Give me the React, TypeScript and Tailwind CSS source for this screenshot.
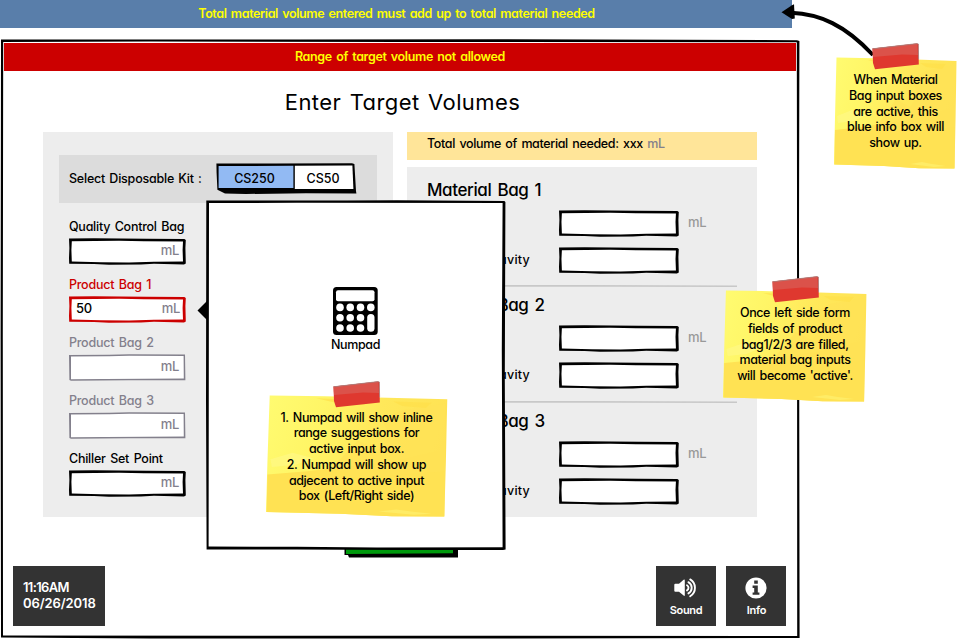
import type { ReactNode } from "react";

type Tone = "black" | "red" | "gray";

const toneFill = { black: "#000", red: "#cc0000", gray: "#83808c" };

/* Hand-drawn box outline that stretches to its parent */
function SketchBox({ tone = "black" }: { tone?: Tone }) {
  const inner =
    tone === "gray"
      ? "M2 2.4 L40 2.2 L60 1.8 L114.6 1.9 L114.8 24.6 L35 25 L2 25.2 Z"
      : "M2.8 3.2 L50 2.8 L75 3.2 L114 3.6 L113.6 12 L114 23.4 L85 23.8 L60 24.4 L32 24.2 L2.8 23.4 L2.4 12 Z";
  const outer =
    tone === "gray"
      ? "M0 1 L40 0.8 L60 0.2 L116 0.4 L116.4 26.3 L60 26.2 L2 26.8 L0.4 26 Z"
      : "M0 0.6 L25 0.2 L78 0.8 L115.4 1 L116.8 2 L116.4 10 L116.8 25.6 L115 26.4 L85 25.8 L72 26.6 L40 26.8 L25 26 L0.2 25.8 L0 20 L0.4 10 Z";
  return (
    <svg className="absolute inset-0 h-full w-full" viewBox="0 0 117 27" preserveAspectRatio="none">
      <path d={outer} fill={toneFill[tone]} />
      <path d={inner} fill="#fff" />
    </svg>
  );
}

const fields: { label: string; tone: Tone; value?: string }[] = [
  { label: "Quality Control Bag", tone: "black" },
  { label: "Product Bag 1", tone: "red", value: "50" },
  { label: "Product Bag 2", tone: "gray" },
  { label: "Product Bag 3", tone: "gray" },
  { label: "Chiller Set Point", tone: "black" },
];

const labelTone = { black: "text-black", red: "text-[#cc0000]", gray: "text-[#83808c]" };

function Field({ label, tone, value }: { label: string; tone: Tone; value?: string }) {
  return (
    <div className="h-[58px]">
      <div className={`h-[22px] leading-[22px] tracking-[-0.25px] [word-spacing:1.5px] ${labelTone[tone]}`}>
        {label}
      </div>
      <div className="relative h-[27px] w-[117px]">
        <SketchBox tone={tone} />
        <div className="relative flex h-[26px] items-center justify-between pr-[7px] pl-[7px] text-[13px] tracking-[-0.3px]">
          <span>{value}</span>
          <span className={value ? "-mr-[1px] text-[#83808c]" : "text-[#83808c]"}>mL</span>
        </div>
      </div>
    </div>
  );
}

function MaterialBag({ n }: { n: number }) {
  return (
    <section className="pl-5">
      <h2
        className={`text-[17px] leading-6 tracking-[-0.4px] [word-spacing:2px] ${n === 1 ? "h-[43px] pt-[11px]" : "h-[38px] pt-[6px]"}`}
      >
        Material Bag {n}
      </h2>
      <div className="flex h-[37px] pl-[132px]">
        <div className="relative h-[27px] w-[120px]">
          <SketchBox />
        </div>
        <span className="ml-[9px] text-[13px] leading-[25px] tracking-[-0.3px] text-[#999]">mL</span>
      </div>
      <div className="flex h-[27px]">
        <span className="w-[132px] leading-[26px] tracking-[0.2px] [word-spacing:4px]">Specific Gravity</span>
        <div className="relative h-[27px] w-[120px]">
          <SketchBox />
        </div>
      </div>
    </section>
  );
}

function Rule() {
  return (
    <svg className="ml-5 block h-[2px] w-[310px]" viewBox="0 0 310 2">
      <path d="M0 0 L160 0 L310 0.6 L310 2 L190 1.8 L0 1.6 Z" fill="#c8c8c8" />
    </svg>
  );
}

function Note({ id, className, lines }: { id: string; className: string; lines: ReactNode[] }) {
  return (
    <div className={`absolute ${className}`}>
      <svg className="absolute inset-0 h-full w-full" viewBox="0 0 123 112" preserveAspectRatio="none">
        <defs>
          <linearGradient id={id} x1="0" y1="0.1" x2="1" y2="0.35">
            <stop offset="0" stopColor="#fffb70" />
            <stop offset="0.3" stopColor="#fff566" />
            <stop offset="0.6" stopColor="#ffe85a" />
            <stop offset="1" stopColor="#ffe253" />
          </linearGradient>
        </defs>
        <path d="M2.5 0.5 L40 1.2 L82 2.6 L122.5 4 L121.6 60 L120.5 111.6 L85 111.2 L50 109 L0 107.4 L1 60 Z" fill={`url(#${id})`} />
        <path d="M1 73 L28 70 L52 66 L80 62 L121 50 L120.5 111.6 L85 111.2 L50 109 L0.4 107.4 Z" fill="#ffe253" />
        <path d="M45 66 L62 42 L76 50 L84 38 L78 22 L92 14 L121 8 L121 70 L60 76 Z" fill="#ffe357" opacity=".7" />
        <path d="M34 3 L72 5 L66 9 L50 8 Z M86 6 L112 7 L108 12 L92 10 Z" fill="#ffe04a" opacity=".7" />
        <path d="M3 59 L18 53 L32 58 L20 64 L4 66 Z" fill="#fff98a" opacity=".6" />
        <path d="M76 107 L88 105 L98 107 L112 109 L100 110 Z" fill="#ffec66" />
      </svg>
      <div className="relative pt-[15px] text-center leading-[15.75px] tracking-[-0.4px] [word-spacing:1.3px]">
        {lines.map((line, i) => (
          <div key={i} className="whitespace-nowrap">
            {line}
          </div>
        ))}
      </div>
      <svg className="absolute -top-[14px] left-1/2 -ml-[23.5px] h-[27px] w-[48px]" viewBox="0 0 48 27">
        <path d="M0.5 5.5 L45 0.5 L46.5 1 L46.8 21.5 L3 26.3 L1 20 Z" fill="#df382f" />
        <path d="M0.5 5.5 L45 0.5 L46 12 L30 11.5 L1 14 Z" fill="#db524a" />
        <path d="M0.5 5.8 L45 0.6 L46.3 1 L46.6 16" stroke="#a58482" strokeWidth=".8" fill="none" />
      </svg>
    </div>
  );
}

function CalculatorIcon() {
  return (
    <svg className="h-12 w-[45px]" viewBox="0 0 45 48">
      <rect width="44.7" height="48" rx="3.5" />
      <g fill="#fff">
        <rect x="3" y="3.2" width="38.5" height="11" rx="2" />
        {[20.4, 30.7, 41].map((y) =>
          [7, 17.2, 27.5].map((x) => <circle key={`${x}-${y}`} cx={x} cy={y} r="3.8" />),
        )}
        <circle cx="37.8" cy="20.4" r="3.8" />
        <rect x="34.2" y="27" width="7.3" height="17.8" rx="3.6" />
      </g>
    </svg>
  );
}

function SoundIcon() {
  return (
    <svg className="h-5 w-6" viewBox="0 0 24 20">
      <path d="M0.3 6.8 Q0.3 5.8 1.3 5.8 H5 L9.6 1.8 Q10.8 1 10.8 2.4 V17 Q10.8 18.4 9.6 17.6 L5 13.8 H1.3 Q0.3 13.8 0.3 12.8 Z" fill="#fff" />
      <g fill="none" stroke="#fff" strokeWidth="1.9" strokeLinecap="round">
        <path d="M13 7.2 A3 3 0 0 1 13 12.4" />
        <path d="M14.4 4.2 A6.4 6.4 0 0 1 14.4 15.4" />
        <path d="M16.2 1.4 A9.8 9.8 0 0 1 16.2 18.2" />
      </g>
    </svg>
  );
}

function InfoIcon() {
  return (
    <svg className="h-[22px] w-[22px]" viewBox="0 0 22 22">
      <circle cx="11" cy="11" r="10.6" fill="#fff" />
      <path d="M9.2 3.5 H12.8 V6.8 H9.2 Z M7.6 8.6 H12.8 V15.4 H14.4 V17.8 H7.6 V15.4 H9.2 V10.9 H7.6 Z" fill="#333" />
    </svg>
  );
}

function Popover() {
  return (
    <div className="absolute top-[161px] left-[197px] h-[350px] w-[309px]">
      <svg className="absolute inset-0" width="309" height="350" viewBox="0 0 309 350">
        <path d="M0.5 110.5 L10 101 V120 Z" />
        <path d="M9.3 0.6 L150 0.6 L200 0.2 L307.4 1 L308.4 2 L307.8 180 L308.6 349.6 L306 350 L200 350 L100 349.6 L9.6 349.4 L9 200 Z" />
        <path d="M12 3 L100 2.8 L305.6 3 L304.8 150 L305.6 347.2 L180 347.4 L100 346.8 L11.6 346.6 Z" fill="#fff" />
      </svg>
      <div className="relative flex flex-col items-center pt-[87px] pl-2">
        <CalculatorIcon />
        <span className="leading-[19px] tracking-[-0.35px]">Numpad</span>
      </div>
      <Note
        id="numpad-note"
        className="top-[194.5px] left-[68.5px] h-[122px] w-[182px]"
        lines={[
          "1. Numpad will show inline",
          "range suggestions for",
          "active input box.",
          "2. Numpad will show up",
          "adjecent to active input",
          "box (Left/Right side)",
        ]}
      />
    </div>
  );
}

export default function App() {
  return (
    <div className="relative h-[639px] w-[958px] overflow-hidden bg-white font-['Inter','Liberation_Sans',sans-serif] text-[12.5px] font-[450] text-black [font-feature-settings:'cv11']">
      <div className="h-7 w-[792px] bg-[#597eaa] text-center leading-[27px] font-semibold tracking-[-0.38px] text-[#ffff00] [word-spacing:1.5px]">
        <span className="pl-[1px]">Total material volume entered must add up to total material needed</span>
      </div>

      <main className="relative mt-[11px] h-[600px] w-[800px]">
        <svg className="absolute inset-0" width="800" height="600" viewBox="0 0 800 600">
          <path d="M1 0.6 L300 0.6 L500 0.2 L797 1.2 L799.4 2 L799 200 L799.6 599 L500 599.6 L150 599.4 L1 598.4 L0.6 300 Z" />
          <path d="M3.2 3 L150 2.6 L400 3 L796.8 3.2 L797 150 L797.2 597 L400 596.8 L3 596.4 L2.8 300 Z" fill="#fff" />
        </svg>
        <div className="relative pt-1">
          <div className="ml-1 h-7 w-[792px] bg-[#cc0000] text-center leading-[27px] font-semibold text-[#ffff00]">
            <span className="tracking-[-0.35px] [word-spacing:1.5px]">Range of target volume not allowed</span>
          </div>
          <h1 className="h-[61px] pl-[5px] text-center text-[22px] leading-[62px] font-normal tracking-[0.4px] [word-spacing:2px]">
            Enter Target Volumes
          </h1>

          <div className="flex gap-[14px] pl-[43px]">
            <div className="h-[385px] w-[350px] bg-[#ededed] pt-[23px]">
              <div className="ml-4 flex h-12 w-[318px] bg-[#dcdcdc] pl-[10px]">
                <span className="w-[147px] leading-[47px] tracking-[-0.2px] [word-spacing:1px]">
                  Select Disposable Kit :
                </span>
                <div className="relative mt-[8px] h-[32px] w-[141px]">
                  <svg className="absolute inset-0" width="141" height="32" viewBox="0 0 141 32">
                    <path d="M0.4 0.6 L60 0.6 L136 0.2 L138.4 1 L140 28 L140.4 30.4 L90 30.2 L30 31 L9 30.6 L1.4 26.8 L0.6 10 Z" />
                    <path d="M2.6 3 L77.4 2.8 V25 H2.6 Z" fill="#92baf3" />
                    <path d="M78.8 2.8 L136.4 2.6 L137.4 26 L78.8 26 Z" fill="#fff" />
                  </svg>
                  <div className="relative flex leading-[31px]">
                    <span className="w-[77px] text-center">CS250</span>
                    <span className="w-[60px] text-center">CS50</span>
                  </div>
                </div>
              </div>
              <div className="mt-[13px] pl-[26px]">
                {fields.map((f) => (
                  <Field key={f.label} {...f} />
                ))}
              </div>
            </div>

            <div className="w-[350px]">
              <div className="h-7 bg-[#ffe599] pl-[20px] leading-[23px] tracking-[-0.36px] [word-spacing:1.5px]">
                Total volume of material needed: xxx <span className="text-[#83808c]">mL</span>
              </div>
              <div className="mt-[7px] h-[350px] bg-[#ededed]">
                <MaterialBag n={1} />
                <div className="h-[13px] pt-[11px]">
                  <Rule />
                </div>
                <MaterialBag n={2} />
                <div className="h-[14px] pt-[12px]">
                  <Rule />
                </div>
                <MaterialBag n={3} />
              </div>
            </div>
          </div>

          <div className="mt-[49px] flex justify-between pr-[14px] pl-[13px] text-white">
            <div className="h-[60px] w-[92px] bg-[#333] pt-[13px] pl-[10px] leading-4 font-semibold">
              <div className="text-[13px] tracking-[-0.65px]">11:16AM</div>
              <div className="text-[13px] tracking-[-0.1px]">06/26/2018</div>
            </div>
            <div className="flex gap-[10px] text-[11px] font-semibold">
              <div className="flex h-[60px] w-[60px] flex-col items-center bg-[#333] pt-[12px]">
                <SoundIcon />
                <span className="mt-[4px] leading-4 tracking-[-0.3px]">Sound</span>
              </div>
              <div className="flex h-[60px] w-[60px] flex-col items-center bg-[#333] pt-[11px]">
                <InfoIcon />
                <span className="mt-[3px] pl-[1px] leading-4 tracking-[-0.2px]">Info</span>
              </div>
            </div>
          </div>
        </div>

        <svg className="absolute top-[505px] left-[344px]" width="116" height="14" viewBox="0 0 116 14">
          <path d="M0.5 0 H114 V13.6 L5 13.6 L4 11 L0.5 11 Z" />
          <path d="M2 0 H109 V9.2 L2 10 Z" fill="#009a0d" />
        </svg>
        <Popover />
      </main>

      <svg className="absolute top-0 left-[775px]" width="110" height="65" viewBox="0 0 110 65">
        <path d="M16 12.8 C45 14 70 25 98 55" fill="none" stroke="#000" strokeWidth="4" />
        <path d="M6.5 12.2 L17 5.2 L19 4.2 L19.8 18.4 L17 19 Z" />
      </svg>
      <Note
        id="info-note"
        className="top-[57px] left-[834px] h-[112px] w-[123px]"
        lines={["When Material", "Bag input boxes", "are active, this", "blue info box will", "show up."]}
      />
      <Note
        id="form-note"
        className="top-[290px] left-[723px] h-[112px] w-[144px]"
        lines={["Once left side form", "fields of product", "bag1/2/3 are filled,", "material bag inputs", "will become 'active'."]}
      />
    </div>
  );
}
